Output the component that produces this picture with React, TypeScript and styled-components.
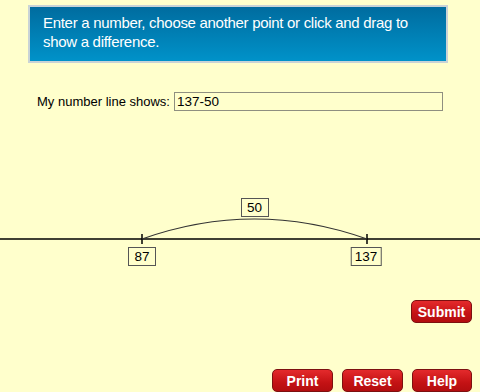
import React from "react";
import styled, { createGlobalStyle } from "styled-components";

const Global = createGlobalStyle`
  html, body { margin: 0; padding: 0; background: #ffffcc; }
  body { font-family: "Liberation Sans", Arial, Helvetica, sans-serif; }
`;

const Page = styled.div`
  width: 480px;
  height: 392px;
  overflow: hidden;
  background: #ffffcc;
  display: flex;
  flex-direction: column;
  position: relative;
`;

const Banner = styled.div`
  margin: 5px 0 0 28px;
  width: 420px;
  height: 60px;
  box-sizing: border-box;
  border: 2px solid #c9d3d6;
  background: linear-gradient(to bottom, #006c9f 0%, #0092c9 100%);
  color: #ffffff;
  font-size: 15px;
  letter-spacing: -0.3px;
  line-height: 19px;
  padding: 6px 10px 0 13px;
`;

const FieldRow = styled.div`
  margin: 29px 0 0 37px;
  display: flex;
  align-items: center;
  gap: 7px;
  font-size: 13px;
  color: #000;
`;

const Label = styled.span`
  width: 130px;
  white-space: nowrap;
`;

const NumberInput = styled.input`
  width: 269px;
  height: 19px;
  box-sizing: border-box;
  border: 1px solid #8f8f80;
  background: #ffffcc;
  font-family: "Liberation Sans", Arial, sans-serif;
  font-size: 13.5px;
  padding: 0 2px;
  margin: 0;
  color: #000;
  outline: none;
`;

const Canvas = styled.div`
  position: relative;
  margin-top: 68px;
  width: 480px;
  height: 100px;
`;

const LineSvg = styled.svg`
  display: block;
  width: 480px;
  height: 100px;
`;

const ValueBox = styled.div<{ $cx: number; $top: number }>`
  position: absolute;
  left: ${(p) => p.$cx}px;
  top: ${(p) => p.$top}px;
  transform: translateX(-50%);
  min-width: 28px;
  height: 19px;
  box-sizing: border-box;
  padding: 0 3px;
  border: 1px solid #555;
  background: #ffffcc;
  font-size: 13.5px;
  line-height: 17px;
  text-align: center;
  color: #000;
`;

const ButtonRow = styled.div<{ $mt: number; $gap?: number }>`
  display: flex;
  justify-content: flex-end;
  gap: ${(p) => p.$gap ?? 0}px;
  padding-right: 8px;
  margin-top: ${(p) => p.$mt}px;
`;

const RedButton = styled.button<{ $w: number }>`
  width: ${(p) => p.$w}px;
  height: 23px;
  box-sizing: border-box;
  border: 1px solid #7d1010;
  border-radius: 5px;
  background: linear-gradient(to bottom, #e42a2c 0%, #c41214 60%, #b30d0f 100%);
  color: #fff;
  font-family: "Liberation Sans", Arial, sans-serif;
  font-weight: bold;
  font-size: 14px;
  padding: 0;
  margin: 0;
  cursor: pointer;
`;

export default function App() {
  // canvas top = 180
  const lineY = 60;
  const x1 = 142;
  const x2 = 367;
  return (
    <Page>
      <Global />
      <Banner>
        Enter a number, choose another point or click and drag to show a difference.
      </Banner>
      <FieldRow>
        <Label>My number line shows:</Label>
        <NumberInput defaultValue="137-50" />
      </FieldRow>
      <Canvas>
        <LineSvg viewBox="0 0 480 100">
          <line x1={0} y1={lineY} x2={480} y2={lineY} stroke="#000" strokeWidth={1.6} />
          <line x1={x1} y1={lineY - 5} x2={x1} y2={lineY + 5} stroke="#000" strokeWidth={1.5} />
          <line x1={x2} y1={lineY - 5} x2={x2} y2={lineY + 5} stroke="#000" strokeWidth={1.5} />
          <path
            d={`M ${x1} ${lineY} Q ${(x1 + x2) / 2} ${lineY - 40} ${x2} ${lineY}`}
            fill="none"
            stroke="#333"
            strokeWidth={1.1}
          />
        </LineSvg>
        <ValueBox $cx={254.5} $top={19}>50</ValueBox>
        <ValueBox $cx={142} $top={68}>87</ValueBox>
        <ValueBox $cx={366} $top={68}>137</ValueBox>
      </Canvas>
      <ButtonRow $mt={21}>
        <RedButton $w={61}>Submit</RedButton>
      </ButtonRow>
      <ButtonRow $mt={46} $gap={9}>
        <RedButton $w={61}>Print</RedButton>
        <RedButton $w={61}>Reset</RedButton>
        <RedButton $w={60}>Help</RedButton>
      </ButtonRow>
    </Page>
  );
}
